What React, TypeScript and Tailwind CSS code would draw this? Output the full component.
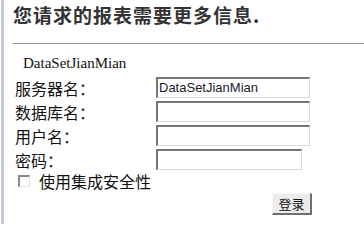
const cjk = { fontFamily: '"Noto Sans CJK SC", "Liberation Sans", sans-serif' };

function Field({ label, value, wide = true }: { label: string; value?: string; wide?: boolean }) {
  return (
    <div className="flex h-[24px] items-start">
      <span className="w-[143px] pl-[2px] pt-[1px] text-[16px] leading-[20px] text-[#111]" style={cjk}>
        {label}
      </span>
      <div
        className={`${wide ? 'w-[154px]' : 'w-[146px]'} h-[21px] border-t-2 border-l-2 border-r border-b border-t-[#767676] border-l-[#767676] border-r-[#d9d9d9] border-b-[#d9d9d9] bg-white pl-[1px] text-[13px] leading-[17px] text-[#221a2a]`}
        style={{ fontFamily: '"Liberation Sans", Arial, sans-serif' }}
      >
        {value}
      </div>
    </div>
  );
}

export default function App() {
  return (
    <div className="flex h-[224px] w-[364px] overflow-hidden bg-white">
      <div className="ml-[1px] w-[3px] bg-[#c3c9d3]" />
      <div className="flex-1 pl-[9px]">
        <h1 className="pt-[5px] text-[19px] font-bold leading-[20px] tracking-[1px] text-[#333]" style={cjk}>
          您请求的报表需要更多信息.
        </h1>
        <hr className="mt-[18px] border-0 border-t border-[#999]" />
        <div
          className="mt-[11px] pl-[10px] text-[15px] leading-[17px] text-[#111]"
          style={{ fontFamily: '"Liberation Serif", "Times New Roman", serif' }}
        >
          DataSetJianMian
        </div>
        <div className="mt-[5px]">
          <Field label="服务器名：" value="DataSetJianMian" />
          <Field label="数据库名：" />
          <Field label="用户名：" />
          <Field label="密码：" wide={false} />
        </div>
        <div className="-mt-[2px] flex items-center gap-[9px] pl-[5px]">
          <span className="h-[12px] w-[12px] border-t-2 border-l-2 border-r border-b border-t-[#8a8a8a] border-l-[#8a8a8a] border-r-[#e4e4e4] border-b-[#e4e4e4] bg-white" />
          <span className="text-[16px] leading-[20px] text-[#111]" style={cjk}>
            使用集成安全性
          </span>
        </div>
        <div className="mt-[2px] flex justify-start pl-[259px]">
          <button
            className="h-[22px] w-[40px] border-t border-l border-r-2 border-b-2 border-t-[#f8f8f8] border-l-[#f8f8f8] border-r-[#707070] border-b-[#707070] bg-[#ececec] text-[13px] leading-[18px] text-[#111]"
            style={cjk}
          >
            登录
          </button>
        </div>
      </div>
    </div>
  );
}
